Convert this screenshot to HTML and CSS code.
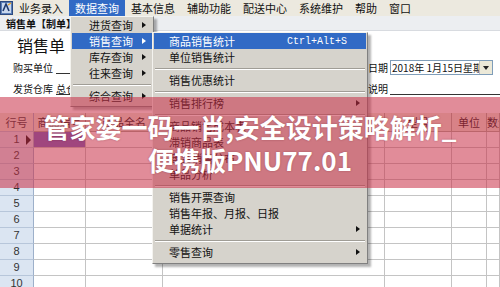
FILE: index.html
```html
<!DOCTYPE html>
<html>
<head>
  <meta charset="utf-8">
  <title>销售单</title>
  <link rel="stylesheet" href="styles.css">
</head>
<body>
  <div class="window">
    <div class="menubar">
      <span class="app-icon">
        <svg width="13" height="14" viewBox="0 0 13 14">
          <rect x="0.5" y="0.5" width="12" height="13" fill="#5b7fb8" stroke="#2d4a80"/>
          <rect x="2" y="2" width="9" height="10" fill="#c9d8ee"/>
          <path d="M3 10 L6 3 L9 10" fill="none" stroke="#1f3a6e" stroke-width="1.6"/>
          <path d="M8 4 L11 2" stroke="#e8a020" stroke-width="1.4"/>
        </svg>
      </span>
      <span class="menu-item">业务录入</span>
      <span class="menu-item active">数据查询</span>
      <span class="menu-item">基本信息</span>
      <span class="menu-item">辅助功能</span>
      <span class="menu-item">配送中心</span>
      <span class="menu-item">系统维护</span>
      <span class="menu-item">帮助</span>
      <span class="menu-item">窗口</span>
    </div>

    <div class="doc-tab">销售单【制单】</div>

    <div class="form">
      <div class="form-left">
        <div class="form-title">销售单</div>
        <div class="field"><span class="label">购买单位</span><span class="line"></span></div>
        <div class="field"><span class="label">发货仓库</span><span class="line">总仓库</span></div>
      </div>
      <div class="form-right">
        <div class="field">
          <span class="label">日期</span>
          <span class="combo"><span class="combo-text">2018年 1月15日星期一</span><span class="combo-btn"></span></span>
        </div>
        <div class="field"><span class="label">说明</span><span class="line"></span></div>
      </div>
    </div>

    <div class="grid">
      <div class="grid-row head">
        <div class="cell num">行号</div>
        <div class="cell">商品编号</div>
        <div class="cell">商品全名</div>
        <div class="cell">规格</div>
        <div class="cell">型号</div>
        <div class="cell">单位</div>
        <div class="cell">数量</div>
      </div>
      <div class="grid-row">
        <div class="cell num current">1<span class="pointer"></span></div>
        <div class="cell selected"></div>
        <div class="cell"></div><div class="cell"></div><div class="cell"></div><div class="cell"></div><div class="cell"></div>
      </div>
      <div class="grid-row"><div class="cell num">2</div><div class="cell"></div><div class="cell"></div><div class="cell"></div><div class="cell"></div><div class="cell"></div><div class="cell"></div></div>
      <div class="grid-row"><div class="cell num">3</div><div class="cell"></div><div class="cell"></div><div class="cell"></div><div class="cell"></div><div class="cell"></div><div class="cell"></div></div>
      <div class="grid-row"><div class="cell num">4</div><div class="cell"></div><div class="cell"></div><div class="cell"></div><div class="cell"></div><div class="cell"></div><div class="cell"></div></div>
      <div class="grid-row"><div class="cell num">5</div><div class="cell"></div><div class="cell"></div><div class="cell"></div><div class="cell"></div><div class="cell"></div><div class="cell"></div></div>
      <div class="grid-row"><div class="cell num">6</div><div class="cell"></div><div class="cell"></div><div class="cell"></div><div class="cell"></div><div class="cell"></div><div class="cell"></div></div>
      <div class="grid-row"><div class="cell num">7</div><div class="cell"></div><div class="cell"></div><div class="cell"></div><div class="cell"></div><div class="cell"></div><div class="cell"></div></div>
      <div class="grid-row"><div class="cell num">8</div><div class="cell"></div><div class="cell"></div><div class="cell"></div><div class="cell"></div><div class="cell"></div><div class="cell"></div></div>
      <div class="grid-row"><div class="cell num">9</div><div class="cell"></div><div class="cell"></div><div class="cell"></div><div class="cell"></div><div class="cell"></div><div class="cell"></div></div>
      <div class="grid-row"><div class="cell num">10</div><div class="cell"></div><div class="cell"></div><div class="cell"></div><div class="cell"></div><div class="cell"></div><div class="cell"></div></div>
    </div>

    <!-- 数据查询 下拉菜单 -->
    <div class="dropdown">
      <div class="dd-item">进货查询<span class="arrow"></span></div>
      <div class="dd-item hl">销售查询<span class="arrow"></span></div>
      <div class="dd-item">库存查询<span class="arrow"></span></div>
      <div class="dd-item">往来查询<span class="arrow"></span></div>
      <div class="dd-sep"></div>
      <div class="dd-item">综合查询<span class="arrow"></span></div>
    </div>

    <div class="submenu">
      <div class="dd-item hl">商品销售统计<span class="shortcut">Ctrl+Alt+S</span></div>
      <div class="dd-item">单位销售统计</div>
      <div class="dd-sep"></div>
      <div class="dd-item">销售优惠统计</div>
      <div class="dd-sep"></div>
      <div class="dd-item">销售排行榜<span class="arrow"></span></div>
      <div class="dd-sep"></div>
      <div class="dd-item">商品销售成本表</div>
      <div class="dd-item">滞销商品表</div>
      <div class="dd-item">商品销售分布</div>
      <div class="dd-item">单品分析</div>
      <div class="dd-sep"></div>
      <div class="dd-item">销售开票查询</div>
      <div class="dd-item">销售年报、月报、日报</div>
      <div class="dd-item">单据统计<span class="arrow"></span></div>
      <div class="dd-sep"></div>
      <div class="dd-item">零售查询<span class="arrow"></span></div>
    </div>

    <div class="banner">
      <div class="banner-text">管家婆一码一肖,安全设计策略解析_<br>便携版PNU77.01</div>
    </div>
  </div>
</body>
</html>
```

FILE: styles.css
```css
body {
  margin: 0;
  font-family: "Noto Sans CJK SC", "Liberation Sans", sans-serif;
  font-size: 11px;
  color: #111;
  background: #fff;
}
.window {
  position: relative;
  width: 500px;
  height: 287px;
  overflow: hidden;
}

/* 菜单栏 */
.menubar {
  display: flex;
  align-items: center;
  height: 16px;
  background: #ece9df;
}
.app-icon {
  display: flex;
  width: 13px;
  height: 16px;
  align-items: center;
}
.menu-item {
  padding: 0 6px;
  line-height: 16px;
  font-size: 11px;
}
.menu-item.active {
  background: #316ac5;
  color: #fff;
}

.doc-tab {
  height: 15px;
  line-height: 15px;
  padding-left: 6px;
  font-size: 10px;
  font-weight: bold;
  background: #eceef1;
  border-bottom: 1px solid #d8dbe0;
  box-sizing: border-box;
}

/* 表头区域 */
.form {
  display: flex;
  justify-content: space-between;
  height: 82px;
}
.form-left {
  width: 150px;
  padding-left: 13px;
}
.form-title {
  height: 26px;
  line-height: 28px;
  padding-left: 4px;
  font-size: 16px;
}
.field {
  display: flex;
  align-items: center;
  height: 21px;
  font-size: 10px;
}
.form-left .field:first-of-type {
  height: 20px;
}
.label {
  margin-right: 3px;
  white-space: nowrap;
}
.line {
  flex: 1;
  height: 11px;
  line-height: 11px;
  border-bottom: 1px solid #333;
  text-decoration: none;
}
.form-right {
  width: 132px;
  padding-top: 26px;
}
.form-right .label {
  margin-right: 2px;
}
.combo {
  display: flex;
  width: 103px;
  height: 15px;
  border: 1px solid #7f9db9;
  box-sizing: border-box;
  background: #fff;
}
.combo-text {
  flex: 1;
  overflow: hidden;
  white-space: nowrap;
  line-height: 13px;
  padding-left: 1px;
  font-size: 10px;
}
.combo-btn {
  position: relative;
  width: 12px;
  background: #ece9d8;
  border-left: 1px solid #c0c0c0;
}
.combo-btn::after {
  content: "";
  position: absolute;
  left: 3px;
  top: 5px;
  border-top: 4px solid #222;
  border-left: 3px solid transparent;
  border-right: 3px solid transparent;
}

/* 明细表格 */
.grid-row {
  display: grid;
  grid-template-columns: 34px 52px 77px 222px 67px 35px 1fr;
  height: 16px;
}
.grid-row.head {
  height: 19px;
}
.cell {
  box-sizing: border-box;
  border-right: 1px solid #c4c4c4;
  border-bottom: 1px solid #c4c4c4;
  font-size: 11px;
  line-height: 15px;
  overflow: hidden;
  white-space: nowrap;
}
.head .cell {
  background: #ece9d8;
  border-color: #aca899;
  line-height: 18px;
  text-align: center;
}
.cell.num {
  position: relative;
  background: #dbe5f2;
  border-right-color: #9db0ca;
  border-bottom-color: #b7c6da;
  font-family: "Liberation Sans", sans-serif;
  text-align: center;
  color: #333;
}
.head .cell.num {
  background: #ece9d8;
  font-family: "Noto Sans CJK SC", sans-serif;
}
.cell.selected {
  background: #7064c4;
}
.pointer {
  position: absolute;
  left: 26px;
  top: 3px;
  border-left: 5px solid #111;
  border-top: 5px solid transparent;
  border-bottom: 5px solid transparent;
}

/* 下拉菜单 */
.dropdown,
.submenu {
  position: absolute;
  background: #d6d3cc;
  border: 1px solid;
  border-color: #f4f3ef #808080 #808080 #f4f3ef;
  box-shadow: 3px 3px 2px rgba(0, 0, 0, 0.3);
  padding: 0 1px 2px 1px;
}
.dropdown {
  top: 16px;
  left: 70px;
  width: 80px;
}
.submenu {
  top: 32px;
  left: 152px;
  width: 212px;
  padding-bottom: 3px;
}
.dd-item {
  position: relative;
  display: flex;
  align-items: center;
  height: 16px;
  padding-left: 17px;
  font-size: 11px;
  white-space: nowrap;
}
.submenu .dd-item {
  padding-left: 15px;
}
.dd-item.hl {
  background: #316ac5;
  color: #fff;
}
.dd-sep {
  height: 0;
  margin: 3px 1px 2px;
  border-top: 1px solid #a09d96;
  border-bottom: 1px solid #fff;
}
.arrow {
  position: absolute;
  right: 6px;
  top: 5px;
  border-left: 4px solid #111;
  border-top: 3px solid transparent;
  border-bottom: 3px solid transparent;
}
.dd-item.hl .arrow {
  border-left-color: #fff;
}
.shortcut {
  margin-left: auto;
  padding-right: 19px;
  font-family: "Liberation Mono", monospace;
  font-size: 10px;
}

/* 叠加横幅 */
.banner {
  position: absolute;
  top: 97px;
  left: 0;
  width: 500px;
  height: 91px;
  background: rgba(200, 45, 70, 0.55);
}
.banner-text {
  padding-top: 13px;
  text-align: center;
  color: #fff;
  font-size: 26px;
  font-weight: bold;
  line-height: 33px;
  text-shadow: 0 0 2px rgba(90, 20, 30, 0.4);
}
```
